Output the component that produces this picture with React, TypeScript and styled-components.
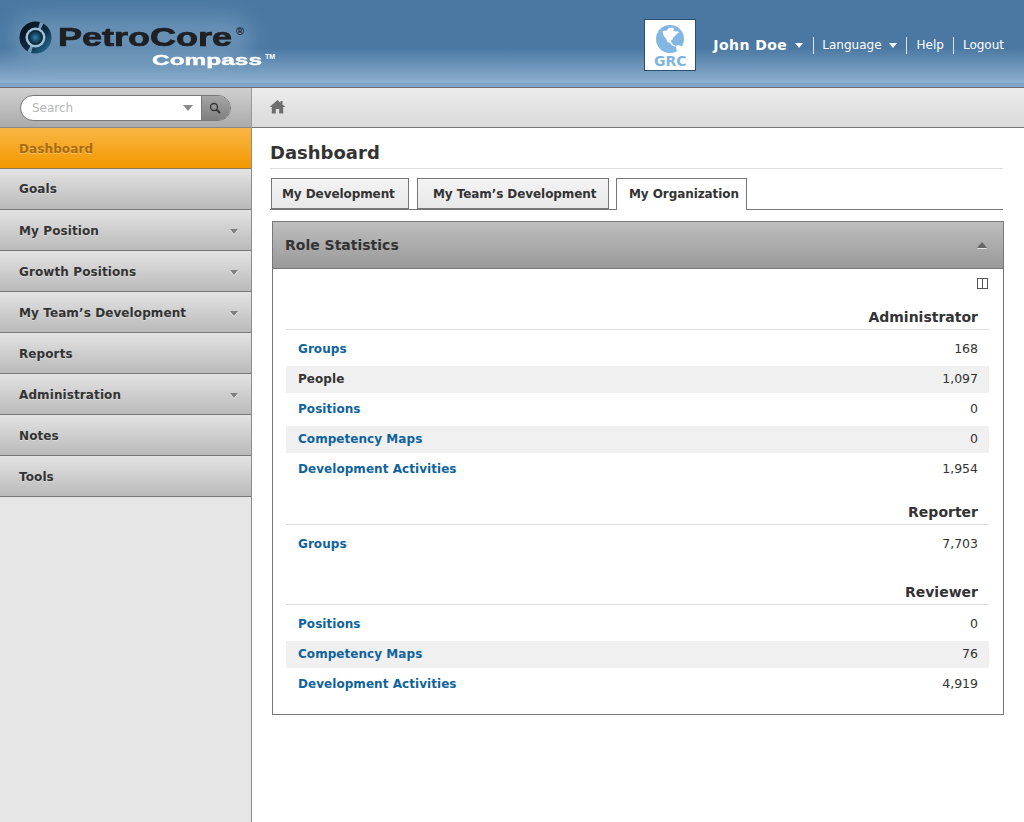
import React from 'react';
import styled, { createGlobalStyle } from 'styled-components';

const Global = createGlobalStyle`
  html, body { margin: 0; padding: 0; background: #fff; }
  body { font-family: "DejaVu Sans", Verdana, sans-serif; color: #333; }
  * { box-sizing: border-box; }
`;

const Page = styled.div`
  width: 1024px; height: 822px; overflow: hidden;
  display: grid; grid-template-columns: 252px 1fr; grid-template-rows: 88px 40px 1fr;
`;
const Header = styled.header`
  grid-column: 1 / 3; display: flex; align-items: flex-start; justify-content: space-between;
  background: linear-gradient(#4a78a2 0, #4a78a2 48px, #8db0cf 83px, #7fa5c8 83px, #7fa5c8 87px, #6f6f6f 87px, #6f6f6f 88px);
`;
const Logo = styled.div`
  position: relative; width: 290px; height: 80px; padding: 21px 0 0 19px;
  display: flex; gap: 6px; align-items: flex-start;
`;
const LogoGlow = styled.div`
  position: absolute; left: 12px; top: 16px; width: 240px; height: 44px; border-radius: 22px;
  background: rgba(190, 215, 235, .26); filter: blur(10px);
`;
const LogoMark = styled.svg`position: relative; width: 33px; height: 33px; flex: none;`;
const LogoWords = styled.div`position: relative; height: 50px; width: 220px;`;
const PetroCore = styled.span`
  position: absolute; left: 0; top: 0; font: bold 25px/32px "Liberation Sans", Arial, sans-serif;
  color: #1e2024; -webkit-text-stroke: .7px #1e2024; white-space: nowrap;
  transform: scaleX(1.44); transform-origin: left;
`;
const Reg = styled.span`
  position: absolute; left: 178px; top: 5px; font: bold 11px/11px "Liberation Sans", Arial, sans-serif; color: #17202a;
`;
const Compass = styled.span`
  position: absolute; left: 94px; top: 30px; font: bold 15px/18px "Liberation Sans", Arial, sans-serif;
  color: #fff; -webkit-text-stroke: .4px #fff; transform: scaleX(1.63); transform-origin: left;
`;
const Tm = styled.span`
  position: absolute; left: 207px; top: 32px; font: bold 7px/8px "Liberation Sans", Arial, sans-serif; color: #fff;
`;
const UserArea = styled.div`display: flex; align-items: flex-start; padding: 19px 20px 0 0;`;
const OrgBadge = styled.div`
  width: 52px; height: 52px; background: #fff; border: 1px solid #2b4f70; margin-right: 8px;
  display: flex; flex-direction: column; align-items: center; padding-top: 5px;
`;
const OrgGlobe = styled.svg`width: 28px; height: 28px; flex: none;`;
const OrgName = styled.span`font: bold 14px/14px "DejaVu Sans", sans-serif; color: #7fb4e0; margin-top: 1px;`;
const UserMenu = styled.nav`display: flex; align-items: center; height: 17px; margin-top: 18px; color: #fff;`;
const UserName = styled.span`
  display: flex; align-items: center; gap: 8px; height: 17px; padding: 0 10px 0 9px;
  font: bold 14px/17px "DejaVu Sans", sans-serif; letter-spacing: .45px;
`;
const MenuItem = styled.span<{ $pl: number; $pr: number }>`
  display: flex; align-items: center; gap: 7px; height: 17px;
  padding: 0 ${p => p.$pr}px 0 ${p => p.$pl}px;
  font: 12px/17px "DejaVu Sans", sans-serif;
  border-left: 1px solid #d7e3ee;
`;
const Caret = styled.i<{ $color?: string; $w?: number; $up?: boolean; $shadow?: boolean }>`
  display: block; width: 0; height: 0;
  border-left: ${p => p.$w ?? 4}px solid transparent; border-right: ${p => p.$w ?? 4}px solid transparent;
  ${p => (p.$up ? 'border-bottom' : 'border-top')}: ${p => (p.$w ?? 4) + 1}px solid ${p => p.$color ?? '#fff'};
  ${p => (p.$shadow ? 'filter: drop-shadow(0 1px 0 rgba(255,255,255,.7));' : '')}
`;
const SearchBar = styled.div`
  background: linear-gradient(#cfcfcf, #ababab); border-right: 1px solid #999; padding: 7px 0 0 20px;
  border-bottom: 1px solid #888;
`;
const SearchBox = styled.div`
  width: 211px; height: 26px; display: flex; border: 1px solid #777; border-radius: 13px; overflow: hidden; background: #fff;
`;
const SearchField = styled.div`
  flex: 1; display: flex; align-items: center; justify-content: space-between; padding: 0 8px 0 11px;
  font: 12px/16px "DejaVu Sans", sans-serif; color: #b5b5b5; border-right: 1px solid #777;
`;
const SearchButton = styled.div`
  width: 28px; background: linear-gradient(#a5a5a5, #7f7f7f); display: flex; align-items: center; justify-content: center; padding-right: 2px;
`;
const Crumbs = styled.div`
  background: linear-gradient(#ececec, #dadada); border-bottom: 1px solid #777;
  display: flex; align-items: center; padding: 0 0 2px 17px;
`;
const Sidebar = styled.aside`background: #e6e6e6; border-right: 1px solid #8c8c8c;`;
const NavItem = styled.div<{ $active?: boolean; $top: number }>`
  height: 41px; display: flex; align-items: center; justify-content: space-between;
  padding: ${p => p.$top}px 13px 0 19px;
  font: bold 12px/16px "DejaVu Sans", sans-serif; letter-spacing: .1px;
  color: ${p => (p.$active ? '#a96b10' : '#333')};
  text-shadow: 0 1px 0 rgba(255, 255, 255, ${p => (p.$active ? '.35' : '.3')});
  background: ${p => (p.$active ? 'linear-gradient(#f9b645, #f39800)' : 'linear-gradient(#e3e3e3, #bababa)')};
  border-bottom: 1px solid ${p => (p.$active ? '#8a7a5a' : '#777')};
`;
const Main = styled.main`padding: 14px 21px 0 18px;`;
const Title = styled.h1`
  margin: 0; height: 27px; font: bold 18px/22px "DejaVu Sans", sans-serif; color: #333; border-bottom: 1px solid #ddd;
`;
const Tabs = styled.div`
  display: flex; height: 32px; margin-top: 9px; padding-left: 1px; border-bottom: 1px solid #777;
`;
const Tab = styled.div<{ $active?: boolean; $w: number; $pl: number; $ml: number }>`
  width: ${p => p.$w}px; height: ${p => (p.$active ? 32 : 31)}px; padding-left: ${p => p.$pl}px; margin-left: ${p => p.$ml}px;
  font: bold 12px/30px "DejaVu Sans", sans-serif; color: #333; white-space: nowrap; letter-spacing: -.08px;
  border: 1px solid #777; ${p => (p.$active ? 'border-bottom: 0;' : '')}
  background: ${p => (p.$active ? '#fff' : 'linear-gradient(#f3f3f3, #e8e8e8)')};
`;
const Panel = styled.section`
  margin: 11px -1px 0 2px; height: 494px; border: 1px solid #777; padding-bottom: 16px;
`;
const PanelHead = styled.div`
  height: 47px; padding: 0 16px 0 12px; display: flex; align-items: center; justify-content: space-between;
  background: linear-gradient(#bebebe, #999); border-bottom: 1px solid #777;
  font: bold 14px/18px "DejaVu Sans", sans-serif; color: #333;
`;
const ColumnsBar = styled.div`height: 33px; display: flex; justify-content: flex-end; align-items: flex-start; padding: 9px 15px 0 0;`;
const ColumnsIcon = styled.svg`width: 11px; height: 11px;`;
const Group = styled.div<{ $top: number }>`margin: ${p => p.$top}px 14px 0 13px;`;
const GroupName = styled.div`
  height: 28px; padding: 5px 11px 0 0; text-align: right; border-bottom: 1px solid #ddd;
  font: bold 14px/20px "DejaVu Sans", sans-serif; color: #333;
`;
const Rows = styled.div`display: grid; gap: 3px; margin-top: 6px;`;
const Row = styled.div<{ $zebra?: boolean }>`
  height: 27px; padding: 0 11px 1px 12px; display: flex; align-items: center; justify-content: space-between;
  background: ${p => (p.$zebra ? '#f0f0f0' : 'transparent')};
`;
const RowLabel = styled.span<{ $plain?: boolean }>`
  font: bold 12px/16px "DejaVu Sans", sans-serif; letter-spacing: .05px; color: ${p => (p.$plain ? '#333' : '#0f639c')};
`;
const RowValue = styled.span`font: 12.5px/16px "DejaVu Sans", sans-serif; color: #333;`;

const nav: [string, boolean][] = [
  ['Goals', false], ['My Position', true], ['Growth Positions', true], ["My Team’s Development", true],
  ['Reports', false], ['Administration', true], ['Notes', false], ['Tools', false],
];

type Stat = { label: string; value: string; plain?: boolean };
const groups: { name: string; top: number; rows: Stat[] }[] = [
  { name: 'Administrator', top: 0, rows: [
    { label: 'Groups', value: '168' }, { label: 'People', value: '1,097', plain: true },
    { label: 'Positions', value: '0' }, { label: 'Competency Maps', value: '0' },
    { label: 'Development Activities', value: '1,954' } ] },
  { name: 'Reporter', top: 14, rows: [{ label: 'Groups', value: '7,703' }] },
  { name: 'Reviewer', top: 19, rows: [
    { label: 'Positions', value: '0' }, { label: 'Competency Maps', value: '76' },
    { label: 'Development Activities', value: '4,919' } ] },
];

const Globe = () => (
  <OrgGlobe viewBox="0 0 28 28">
    <circle cx="14" cy="14" r="14" fill="#82b7e3" />
    <path d="M6.5 6l4.5-.5 1.5-2.5 4.5-.5 1 1.5-1 1.5 3 1 1.5-.5 1.5 1.5-2.5 1.5-1.5 2-1.5 1-1 2.5-1.5 1 .5 2 2 2.5 2 .5-.5 1-3-1-2-2.5-2.5-1-1.5-3.5-2-2-1-3z" fill="#fff" />
    <path d="M19.5 21l3-1 3.5 1.5-2 3-3 2-.5-2.5z" fill="#fff" />
  </OrgGlobe>
);

export default function App() {
  return (
    <Page>
      <Global />
      <Header>
        <Logo>
          <LogoGlow />
          <LogoMark viewBox="0 0 33 33">
            <defs>
              <linearGradient id="lg" x1="0" y1="0" x2="1" y2="1">
                <stop offset="0" stopColor="#070a12" />
                <stop offset=".55" stopColor="#0e2b44" />
                <stop offset="1" stopColor="#2c7ea6" />
              </linearGradient>
              <radialGradient id="core">
                <stop offset="0" stopColor="#2f7fa8" />
                <stop offset=".7" stopColor="#123a56" />
                <stop offset="1" stopColor="#0b1a28" />
              </radialGradient>
            </defs>
            <circle cx="16.5" cy="16.5" r="16" fill="url(#lg)" />
            <path d="M21 1l3.5 1.5-4 8-2-1zM12 32l-3.5-1.5 4-8 2 1z" fill="#6f9cbb" />
            <circle cx="16.5" cy="16.5" r="10" fill="#9cc0d6" />
            <circle cx="16.5" cy="16.5" r="7.5" fill="url(#core)" />
          </LogoMark>
          <LogoWords>
            <PetroCore>PetroCore</PetroCore>
            <Reg>®</Reg>
            <Compass>Compass</Compass>
            <Tm>TM</Tm>
          </LogoWords>
        </Logo>
        <UserArea>
          <OrgBadge><Globe /><OrgName>GRC</OrgName></OrgBadge>
          <UserMenu>
            <UserName>John Doe <Caret /></UserName>
            <MenuItem $pl={8} $pr={9}>Language <Caret /></MenuItem>
            <MenuItem $pl={10} $pr={9}>Help</MenuItem>
            <MenuItem $pl={9} $pr={0}>Logout</MenuItem>
          </UserMenu>
        </UserArea>
      </Header>
      <SearchBar>
        <SearchBox>
          <SearchField>Search <Caret $color="#8a8a8a" $w={5} /></SearchField>
          <SearchButton>
            <svg width="12" height="12" viewBox="0 0 12 12" fill="none" stroke="#333" strokeWidth="1.3">
              <circle cx="5" cy="5" r="3.5" /><path d="M7.6 7.6L11 11" strokeWidth="2" />
            </svg>
          </SearchButton>
        </SearchBox>
      </SearchBar>
      <Crumbs>
        <svg width="17" height="15" viewBox="0 0 17 15" fill="#6e6e6e">
          <path d="M8.5 1L0.5 8h2.3v6.5h4V10h3.4v4.5h4V8h2.3l-3-2.6V2h-2v1.7z" />
        </svg>
      </Crumbs>
      <Sidebar>
        <NavItem $active $top={1}>Dashboard</NavItem>
        {nav.map(([label, sub], i) => (
          <NavItem key={label} $top={i > 0 ? 2 : 0}>{label}{sub && <Caret $color="#808080" $shadow />}</NavItem>
        ))}
      </Sidebar>
      <Main>
        <Title>Dashboard</Title>
        <Tabs>
          <Tab $w={138} $pl={10} $ml={0}>My Development</Tab>
          <Tab $w={192} $pl={15} $ml={8}>My Team’s Development</Tab>
          <Tab $w={131} $pl={12} $ml={7} $active>My Organization</Tab>
        </Tabs>
        <Panel>
          <PanelHead>Role Statistics <Caret $up $color="#666" $w={5} $shadow /></PanelHead>
          <ColumnsBar>
            <ColumnsIcon viewBox="0 0 11 11" fill="none" stroke="#555">
              <rect x=".5" y=".5" width="10" height="10" /><path d="M5.5 .5v10" />
            </ColumnsIcon>
          </ColumnsBar>
          {groups.map(g => (
            <Group key={g.name} $top={g.top}>
              <GroupName>{g.name}</GroupName>
              <Rows>
                {g.rows.map((r, i) => (
                  <Row key={r.label} $zebra={i % 2 === 1}>
                    <RowLabel $plain={r.plain}>{r.label}</RowLabel>
                    <RowValue>{r.value}</RowValue>
                  </Row>
                ))}
              </Rows>
            </Group>
          ))}
        </Panel>
      </Main>
    </Page>
  );
}
